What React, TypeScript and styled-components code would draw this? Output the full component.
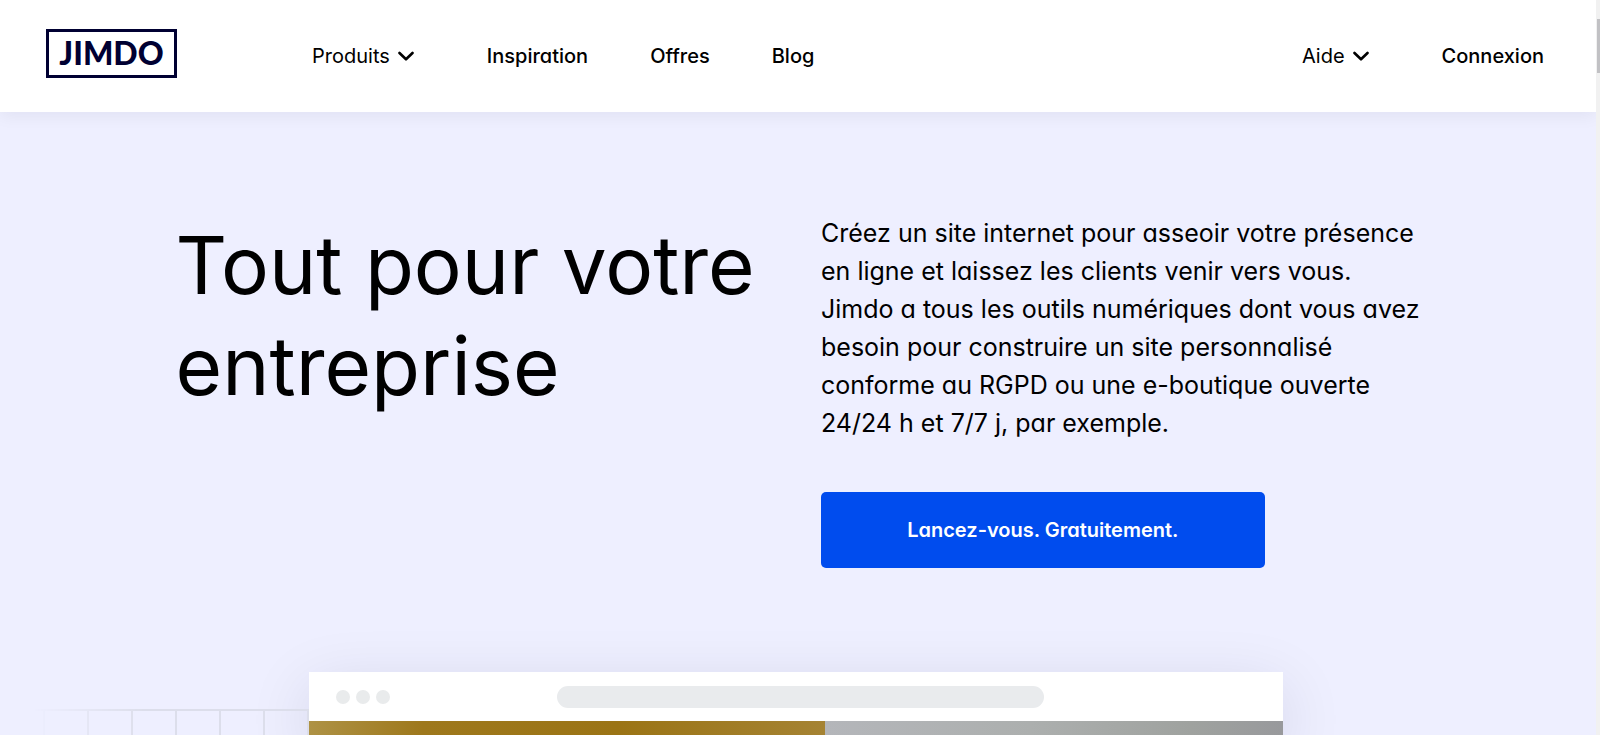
import React from "react";
import styled, { createGlobalStyle } from "styled-components";

const GlobalStyle = createGlobalStyle`
  *, *::before, *::after { box-sizing: border-box; }
  html, body { margin: 0; overflow: hidden; }
  body {
    font-family: Inter, "Liberation Sans", sans-serif;
    font-feature-settings: "cv11";
    color: #000;
    background: #eeefff;
  }
`;

const Shell = styled.div`
  display: flex;
  height: 100vh;
  overflow: hidden;
`;

const Page = styled.div`
  flex: 1;
  min-width: 0;
  display: flex;
  flex-direction: column;
`;

const ScrollTrack = styled.div`
  width: 4px;
  padding: 19px 0 0 1px;
  background: #f1f1f1;
`;

const ScrollThumb = styled.div`
  height: 54px;
  background: #c1c1c4;
`;

const Header = styled.header`
  display: flex;
  align-items: center;
  height: 112px;
  padding: 0 52px 0 46px;
  background: #fff;
  box-shadow: 0 4px 16px rgba(0, 0, 40, 0.06);
`;

const Logo = styled.a`
  display: flex;
  align-items: center;
  justify-content: center;
  width: 131px;
  height: 49px;
  margin: 0 135px 6px 0;
  border: 3px solid #000032;
  color: #000032;
  font-family: Lato, Inter, sans-serif;
  font-size: 32px;
  font-weight: 900;
  line-height: 40px;
  text-decoration: none;
`;

const NavGroup = styled.nav<{ $end?: boolean }>`
  display: flex;
  align-items: center;
  gap: 62px;
  margin-left: ${(p) => (p.$end ? "auto" : "0")};
`;

const NavLink = styled.a`
  color: #000;
  font-size: 20px;
  font-weight: 500;
  line-height: 28px;
  text-decoration: none;
`;

const NavMenu = styled.button`
  display: flex;
  align-items: center;
  gap: 8px;
  padding: 0 11px 0 0;
  border: 0;
  background: none;
  color: #000;
  font: inherit;
  font-feature-settings: inherit;
  font-size: 20px;
  font-weight: 400;
  line-height: 28px;
  cursor: pointer;
`;

const Hero = styled.section`
  display: grid;
  grid-template-columns: 1fr 1fr;
  column-gap: 46px;
  padding: 102px 11% 104px;
`;

const Title = styled.h1`
  margin: 0;
  font-size: 80px;
  font-weight: 400;
  line-height: 101px;
`;

const Intro = styled.p`
  margin: 0 0 50px;
  font-size: 25px;
  font-weight: 400;
  line-height: 38px;
`;

const Cta = styled.button`
  width: 74%;
  height: 76px;
  border: 0;
  border-radius: 5px;
  background: #004cee;
  color: #fff;
  font: inherit;
  font-feature-settings: inherit;
  font-size: 20px;
  font-weight: 600;
  cursor: pointer;
`;

const Stage = styled.div`
  flex: 1;
  min-height: 0;
  display: flex;
  padding-right: 4px;
`;

const Side = styled.div`
  flex: 1;
  padding-top: 37px;
`;

const GridPattern = styled.div`
  width: 276px;
  height: 100%;
  margin-left: auto;
  border-top: 2px solid #dcdeeb;
  background: repeating-linear-gradient(to left, #dcdeeb 0 2px, transparent 2px 44px);
  mask-image: linear-gradient(to right, transparent, #000 40%);
`;

const Browser = styled.div`
  width: 61.2%;
  display: flex;
  flex-direction: column;
  box-shadow: 0 16px 64px rgba(20, 20, 60, 0.12);
`;

const BrowserBar = styled.div`
  display: grid;
  grid-template-columns: 248px 50% 1fr;
  align-items: center;
  height: 49px;
  flex-shrink: 0;
  background: #fff;
`;

const Dots = styled.div`
  display: flex;
  gap: 6px;
  padding-left: 27px;
`;

const Dot = styled.span`
  width: 14px;
  height: 14px;
  border-radius: 50%;
  background: #e9ebec;
`;

const AddressField = styled.div`
  height: 22px;
  border-radius: 11px;
  background: #e9ebed;
`;

const Photos = styled.div`
  flex: 1;
  display: grid;
  grid-template-columns: 53% 47%;
`;

const GoldPhoto = styled.div`
  background: linear-gradient(to right, #ae9245, #9e781c 22%, #9b7415 60%, #a58333);
`;

const GreyPhoto = styled.div`
  background: linear-gradient(to right, #b4b6ba, #acafae 45%, #9fa29f 80%, #98999c);
`;

const Chevron = () => (
  <svg width="16" height="10" viewBox="0 0 16 10" fill="none" aria-hidden="true">
    <path
      d="M1.500 2 8 8.300 14.500 2"
      stroke="#000"
      strokeWidth="2.600"
      strokeLinecap="round"
      strokeLinejoin="round"
    />
  </svg>
);

export default function App() {
  return (
    <>
      <GlobalStyle />
      <Shell>
        <Page>
          <Header>
            <Logo href="#">JIMDO</Logo>
            <NavGroup aria-label="Principal">
              <NavMenu type="button">
                Produits
                <Chevron />
              </NavMenu>
              <NavLink href="#">Inspiration</NavLink>
              <NavLink href="#">Offres</NavLink>
              <NavLink href="#">Blog</NavLink>
            </NavGroup>
            <NavGroup $end aria-label="Compte">
              <NavMenu type="button">
                Aide
                <Chevron />
              </NavMenu>
              <NavLink href="#">Connexion</NavLink>
            </NavGroup>
          </Header>
          <Hero>
            <Title>Tout pour votre entreprise</Title>
            <div>
              <Intro>
                Créez un site internet pour asseoir votre présence
                <br />
                en ligne et laissez les clients venir vers vous.
                <br />
                Jimdo a tous les outils numériques dont vous avez
                <br />
                besoin pour construire un site personnalisé
                <br />
                conforme au RGPD ou une e-boutique ouverte
                <br />
                24/24 h et 7/7 j, par exemple.
              </Intro>
              <Cta type="button">Lancez-vous. Gratuitement.</Cta>
            </div>
          </Hero>
          <Stage>
            <Side>
              <GridPattern />
            </Side>
            <Browser>
              <BrowserBar>
                <Dots>
                  <Dot />
                  <Dot />
                  <Dot />
                </Dots>
                <AddressField />
              </BrowserBar>
              <Photos>
                <GoldPhoto />
                <GreyPhoto />
              </Photos>
            </Browser>
            <Side />
          </Stage>
        </Page>
        <ScrollTrack>
          <ScrollThumb />
        </ScrollTrack>
      </Shell>
    </>
  );
}
